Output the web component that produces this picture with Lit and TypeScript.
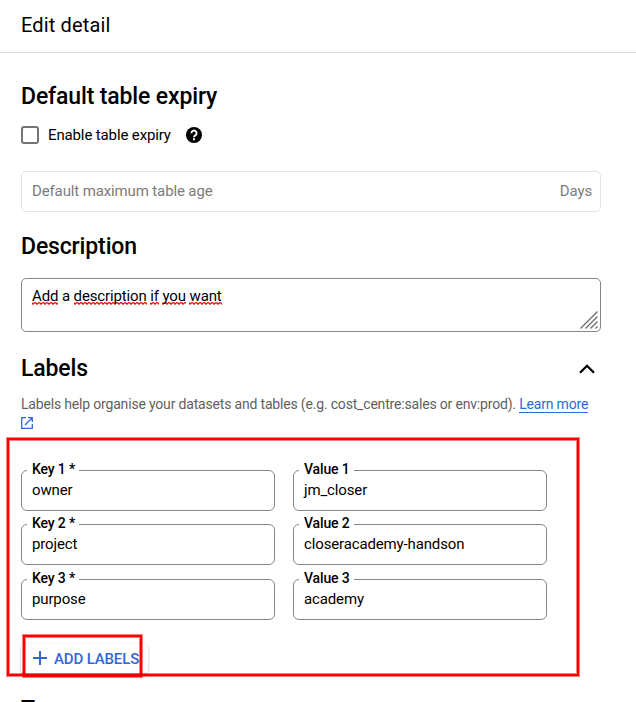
import { LitElement, html, css } from "lit";
import { customElement, property } from "lit/decorators.js";

@customElement("outlined-field")
class OutlinedField extends LitElement {
  @property() label = "";
  @property() value = "";

  static styles = css`
    :host { display: block; }
    .field {
      box-sizing: border-box; margin: 0; padding: 0 10px; height: 50px; min-width: 0;
      border: 1px solid #80868b; border-radius: 6px;
    }
    .legend {
      margin-left: -5px; padding: 0 4px 0 5px; height: 18px;
      font-size: 14px; line-height: 16px; font-weight: 500; letter-spacing: -.15px; color: #000;
    }
    .value { font-size: 15px; line-height: 20px; margin-top: 1px; letter-spacing: -.14px; color: #000; }
  `;

  render() {
    return html`<fieldset class="field">
      <legend class="legend">${this.label}</legend>
      <div class="value">${this.value}</div>
    </fieldset>`;
  }
}

@customElement("app-root")
class AppRoot extends LitElement {
  static styles = css`
    :host {
      display: block; height: 702px; overflow: hidden; background: #fff; color: #000;
      font-family: Roboto, "Liberation Sans", sans-serif; font-size: 15px; letter-spacing: -.13px;
    }
    .header {
      box-sizing: border-box; height: 53px; padding: 13px 21px 0;
      border-bottom: 1px solid #dcdcdc;
    }
    .title { margin: 0; font-size: 20px; line-height: 24px; font-weight: 400; letter-spacing: .15px; }
    .content { padding: 30px 35px 0 21px; }
    .heading { margin: 0; font-size: 23px; line-height: 28px; font-weight: 500; letter-spacing: -.14px; }
    .check-row { display: flex; align-items: center; height: 20px; margin-top: 14px; }
    .checkbox {
      box-sizing: border-box; width: 18px; height: 18px; border: 2px solid #757575; border-radius: 3px;
    }
    .check-label { margin-left: 9px; width: 138px; }
    .help { width: 16px; height: 16px; margin-bottom: 1px; }
    .age {
      box-sizing: border-box; display: flex; justify-content: space-between; align-items: center;
      height: 41px; margin: 26px 0 21px; padding: 0 8px 1px 10px;
      border: 1px solid #e3e3e3; border-radius: 5px; color: #7c7c7c;
    }
    .description {
      box-sizing: border-box; display: flex; justify-content: space-between; height: 54px;
      margin: 17px 0 23px; padding: 7px 2px 2px 10px; border: 1px solid #80868b; border-radius: 5px;
    }
    .text { line-height: 20px; }
    .misspelt {
      background: url("data:image/svg+xml,%3Csvg xmlns='http://www.w3.org/2000/svg' width='4' height='3'%3E%3Cpath d='M-1 -.2L1 2.200L3 .4L5 2.200' fill='none' stroke='red' stroke-width='1.200'/%3E%3C/svg%3E") left bottom repeat-x;
    }
    .grip { width: 18px; height: 18px; align-self: flex-end; }
    .labels-head { display: flex; justify-content: space-between; align-items: center; }
    .chevron { width: 16px; height: 10px; margin: 0 6px 1px 0; }
    .help-text {
      margin: 12px -10px 0 0; font-size: 14px; line-height: 19px; letter-spacing: -.18px; color: #5f5f5f;
    }
    .link { color: #3367d6; text-decoration: none; border-bottom: 1px solid #3367d6; }
    .external { display: block; width: 12px; height: 12px; margin-top: 3px; }
    .marked {
      box-sizing: border-box; width: 572px; height: 238px; margin: 9px 0 0 -14px;
      padding: 21px 0 0 12px; border: 2px solid #f00;
      box-shadow: 0 0 0 1px rgba(255, 0, 0, .5), inset 0 0 0 1px rgba(255, 0, 0, .5);
    }
    .grid {
      display: grid; grid-template-columns: 254px 254px; grid-template-rows: 54px 55px 50px;
      column-gap: 18px;
    }
    .button-mark {
      box-sizing: border-box; width: 119px; height: 42px; margin: 15px 0 0 2px;
      border: 2px solid #f00;
      box-shadow: 0 0 0 1px rgba(255, 0, 0, .5), inset 0 0 0 1px rgba(255, 0, 0, .5);
    }
    .button {
      display: flex; align-items: center; box-sizing: border-box; width: 127px; height: 29px;
      margin: 7px 0 0 -4px; padding: 0 0 0 12px; border: 0; border-radius: 4px; background: transparent;
      box-shadow: 0 1px 3px rgba(0, 0, 0, .25); color: #3367d6;
      font-family: inherit; font-size: 15px; font-weight: 500; letter-spacing: -.15px; white-space: nowrap;
    }
    .plus { width: 14px; height: 14px; margin: 0 7px 1px 0; flex: none; }
    .next { margin-top: 20px; }
  `;

  private rows = [
    ["owner", "jm_closer"],
    ["project", "closeracademy-handson"],
    ["purpose", "academy"],
  ];

  private misspelt(word: string) {
    return html`<span class="misspelt">${word}</span>`;
  }

  render() {
    return html`
      <header class="header"><h1 class="title">Edit detail</h1></header>
      <main class="content">
        <h2 class="heading">Default table expiry</h2>
        <div class="check-row">
          <span class="checkbox"></span><span class="check-label">Enable table expiry</span>
          <svg class="help" viewBox="0 0 16 16"><circle cx="8" cy="8" r="8"/><path d="M5.400 6.200a2.600 2.600 0 1 1 4.200 2C8.500 9 8 9.300 8 10.300M8 11.300v1.900" fill="none" stroke="#fff" stroke-width="1.900"/></svg>
        </div>
        <div class="age"><span>Default maximum table age</span><span>Days</span></div>
        <h2 class="heading">Description</h2>
        <div class="description">
          <div class="text">${this.misspelt("Add")} a ${this.misspelt("description")} ${this.misspelt("if")} ${this.misspelt("you")} ${this.misspelt("want")}</div>
          <svg class="grip" viewBox="0 0 18 18" fill="none" stroke="#666" stroke-width="1.2">
            <path d="M.5 17.500L17.500.5M5.500 17.500l12-12M10.500 17.500l7-7M15.500 17.500l2-2"/>
          </svg>
        </div>
        <div class="labels-head">
          <h2 class="heading">Labels</h2>
          <svg class="chevron" viewBox="0 0 16 10" fill="none" stroke="#000" stroke-width="2.300"><path d="M1 8.800L8 1.800l7 7"/></svg>
        </div>
        <p class="help-text">Labels help organise your datasets and tables (e.g. cost_centre:sales or env:prod). <a class="link">Learn more</a></p>
        <svg class="external" viewBox="0 0 12 12" fill="none" stroke="#3367d6" stroke-width="1.300"><path d="M5 .7H.7v10.600h10.600V7M7 .7h4.300V5M11.300.7L4 8"/></svg>
        <section class="marked">
          <div class="grid">
            ${this.rows.map(([key, value], i) => html`
              <outlined-field .label=${`Key ${i + 1} *`} .value=${key}></outlined-field>
              <outlined-field .label=${`Value ${i + 1}`} .value=${value}></outlined-field>`)}
          </div>
          <div class="button-mark">
            <button class="button">
              <svg class="plus" viewBox="0 0 14 14" stroke="#3367d6" stroke-width="2"><path d="M7 0v14M0 7h14"/></svg>ADD LABELS
            </button>
          </div>
        </section>
        <h2 class="heading next">Tags</h2>
      </main>`;
  }
}
